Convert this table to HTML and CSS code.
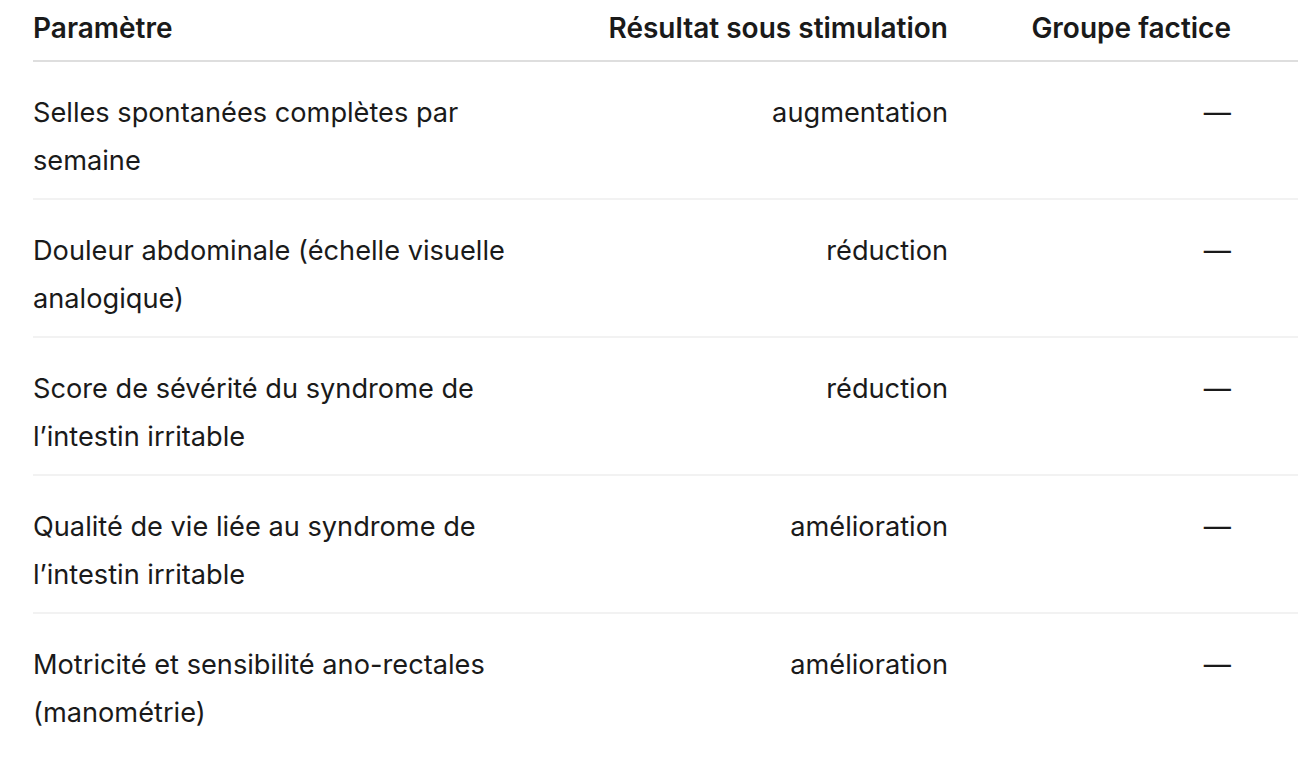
FILE: index.html
```html
<!DOCTYPE html>
<html lang="fr">
<head>
<meta charset="utf-8">
<title>Tableau</title>
<link rel="stylesheet" href="styles.css">
</head>
<body>
<table class="results">
  <colgroup>
    <col class="c-param">
    <col class="c-stim">
    <col class="c-sham">
  </colgroup>
  <thead>
    <tr>
      <th class="param">Paramètre</th>
      <th class="num">Résultat sous stimulation</th>
      <th class="num last">Groupe factice</th>
    </tr>
  </thead>
  <tbody>
    <tr>
      <td class="param">Selles spontanées complètes par semaine</td>
      <td class="num">augmentation</td>
      <td class="num last">—</td>
    </tr>
    <tr>
      <td class="param">Douleur abdominale (échelle visuelle analogique)</td>
      <td class="num">réduction</td>
      <td class="num last">—</td>
    </tr>
    <tr>
      <td class="param">Score de sévérité du syndrome de l’intestin irritable</td>
      <td class="num">réduction</td>
      <td class="num last">—</td>
    </tr>
    <tr>
      <td class="param">Qualité de vie liée au syndrome de l’intestin irritable</td>
      <td class="num">amélioration</td>
      <td class="num last">—</td>
    </tr>
    <tr>
      <td class="param">Motricité et sensibilité ano-rectales (manométrie)</td>
      <td class="num">amélioration</td>
      <td class="num last">—</td>
    </tr>
  </tbody>
</table>
</body>
</html>
```

FILE: styles.css
```css
html, body {
  margin: 0;
  padding: 0;
  background: #ffffff;
}

body {
  font-family: Inter, "Noto Sans", "Liberation Sans", sans-serif;
  color: #1a1a1a;
  font-size: 27.2px;
}

.results {
  border-collapse: collapse;
  table-layout: fixed;
  width: 1265px;
  margin-left: 33px;
}

.c-param { width: 520px; }
.c-stim { width: 395px; }
.c-sham { width: 350px; }

.results th {
  font-size: 28px;
  font-weight: 600;
  line-height: 48px;
  padding: 4px 0 8px 0;
  border-bottom: 2px solid #dedede;
  text-align: left;
}

.results td {
  line-height: 48px;
  padding: 27px 0 13px 0;
  border-bottom: 2px solid #f2f2f2;
  vertical-align: top;
}

.results tbody tr:last-child td {
  border-bottom: none;
}

.results .param {
  padding-right: 20px;
}

.results .num {
  text-align: right;
}

.results .last {
  padding-right: 67px;
}
```
